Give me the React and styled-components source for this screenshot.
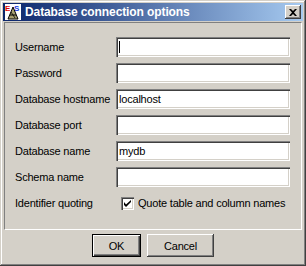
import React from 'react';
import styled, { createGlobalStyle } from 'styled-components';

const GlobalStyle = createGlobalStyle`
  html, body {
    margin: 0;
    padding: 0;
    background: #d4d0c8;
  }
  * {
    box-sizing: border-box;
  }
`;

const Window = styled.div`
  width: 306px;
  height: 266px;
  padding: 3px;
  display: flex;
  flex-direction: column;
  background: #d4d0c8;
  box-shadow: inset -1px -1px #404040, inset 1px 1px #d4d0c8,
    inset -2px -2px #808080, inset 2px 2px #ffffff;
  font-family: 'Liberation Sans', Arial, sans-serif;
  font-size: 11px;
  letter-spacing: -0.2px;
  color: #000;
`;

const TitleBar = styled.div`
  height: 18px;
  display: flex;
  align-items: center;
  padding: 0 2px 0 2px;
  background: linear-gradient(to right, #0a246a, #a6caf0);
`;

const TitleIcon = styled.svg`
  width: 16px;
  height: 16px;
  flex: none;
  display: block;
`;

const TitleText = styled.div`
  flex: 1;
  margin-left: 4px;
  color: #fff;
  font-weight: bold;
  font-size: 12px;
  letter-spacing: -0.1px;
  white-space: nowrap;
`;

const CloseButton = styled.div`
  width: 16px;
  height: 14px;
  display: flex;
  align-items: center;
  justify-content: center;
  background: #d4d0c8;
  box-shadow: inset -1px -1px #404040, inset 1px 1px #ffffff,
    inset -2px -2px #808080;
`;

const Panel = styled.div`
  margin: 1px 1px 0 1px;
  height: 208px;
  border-top: 1px solid #808080;
  border-left: 1px solid #808080;
  border-right: 1px solid #ffffff;
  border-bottom: 1px solid #ffffff;
  padding: 14px 11px 16px 10px;
  display: grid;
  grid-template-columns: 101px 174px;
  grid-auto-rows: 20px;
  row-gap: 6px;
  align-items: center;
`;

const Label = styled.div`
  white-space: nowrap;
`;

const Field = styled.div`
  height: 20px;
  background: #fff;
  padding: 0 3px;
  display: flex;
  align-items: center;
  box-shadow: inset 1px 1px #808080, inset 2px 2px #404040,
    inset -1px -1px #ffffff, inset -2px -2px #d4d0c8;
  white-space: nowrap;
`;

const Caret = styled.span`
  width: 1px;
  height: 12px;
  background: #000;
`;

const CheckRow = styled.div`
  display: flex;
  align-items: center;
  padding-left: 5px;
  gap: 4px;
  white-space: nowrap;
`;

const CheckBox = styled.div`
  width: 13px;
  height: 13px;
  background: #fff;
  display: flex;
  align-items: center;
  justify-content: center;
  box-shadow: inset 1px 1px #808080, inset 2px 2px #404040,
    inset -1px -1px #ffffff, inset -2px -2px #d4d0c8;
`;

const Footer = styled.div`
  height: 33px;
  display: flex;
  justify-content: center;
  align-items: flex-start;
  padding-top: 4px;
  gap: 6px;
`;

const Button = styled.div`
  width: ${p => p.width}px;
  height: 23px;
  display: flex;
  align-items: center;
  justify-content: center;
  background: #d4d0c8;
  box-shadow: ${p =>
    p.primary
      ? 'inset 0 0 0 1px #000, inset 2px 2px #ffffff, inset -2px -2px #404040, inset -3px -3px #808080'
      : 'inset -1px -1px #404040, inset 1px 1px #ffffff, inset -2px -2px #808080'};
`;

function Logo() {
  return (
    <TitleIcon viewBox="0 0 16 16">
      <rect x="0" y="0" width="16" height="16" fill="#fff" />
      <text x="0" y="7" fontSize="8" fontWeight="bold" fill="#e00000" fontFamily="Liberation Sans, sans-serif">E</text>
      <text x="9" y="7" fontSize="8" fontWeight="bold" fill="#2040e0" fontFamily="Liberation Sans, sans-serif">S</text>
      <polygon points="8,3 13,15 3,15" fill="#a8a070" stroke="#000" strokeWidth="1" />
      <line x1="5" y1="11" x2="11" y2="11" stroke="#000" strokeWidth="1" />
      <line x1="6" y1="8" x2="10" y2="14" stroke="#000" strokeWidth="0.8" />
    </TitleIcon>
  );
}

const fields = [
  { label: 'Username', value: '', caret: true },
  { label: 'Password', value: '' },
  { label: 'Database hostname', value: 'localhost' },
  { label: 'Database port', value: '' },
  { label: 'Database name', value: 'mydb' },
  { label: 'Schema name', value: '' },
];

export default function App() {
  return (
    <>
      <GlobalStyle />
      <Window>
        <TitleBar>
          <Logo />
          <TitleText>Database connection options</TitleText>
          <CloseButton>
            <svg width="8" height="7" viewBox="0 0 8 7">
              <path d="M0 0h2l2 2 2-2h2L5 3.5 8 7H6L4 5 2 7H0l3-3.5z" fill="#000" />
            </svg>
          </CloseButton>
        </TitleBar>
        <Panel>
          {fields.map(f => (
            <React.Fragment key={f.label}>
              <Label>{f.label}</Label>
              <Field>
                {f.caret && <Caret />}
                {f.value}
              </Field>
            </React.Fragment>
          ))}
          <Label>Identifier quoting</Label>
          <CheckRow>
            <CheckBox>
              <svg width="7" height="7" viewBox="0 0 7 7">
                <path d="M0 2v3l2 2 5-5V0L2 4.5z" fill="#000" />
              </svg>
            </CheckBox>
            Quote table and column names
          </CheckRow>
        </Panel>
        <Footer>
          <Button primary width={49}>OK</Button>
          <Button width={67}>Cancel</Button>
        </Footer>
      </Window>
    </>
  );
}
